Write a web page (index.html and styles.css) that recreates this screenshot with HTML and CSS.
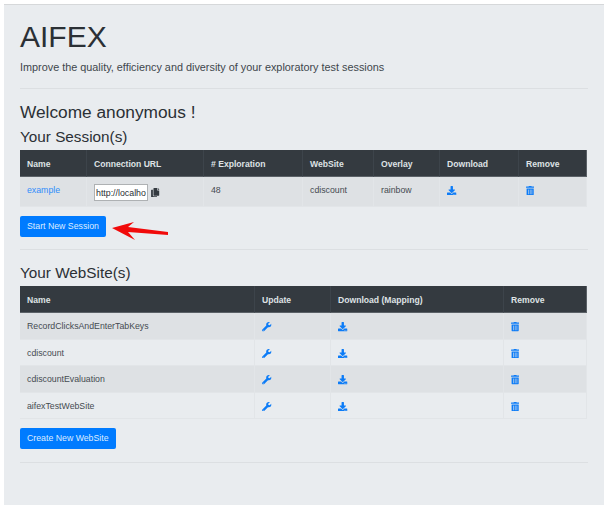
FILE: index.html
```html
<!DOCTYPE html>
<html lang="en">
<head>
<meta charset="utf-8">
<title>AIFEX</title>
<link rel="stylesheet" href="styles.css">
</head>
<body>
<svg class="defs" width="0" height="0" aria-hidden="true">
  <symbol id="i-download" viewBox="0 0 512 512"><path d="M216 0h80c13.3 0 24 10.7 24 24v168h87.7c17.8 0 26.7 21.5 14.1 34.1L269.7 378.3c-7.5 7.5-19.8 7.5-27.3 0L90.1 226.1c-12.6-12.6-3.7-34.1 14.1-34.1H192V24c0-13.3 10.7-24 24-24zm296 376v112c0 13.3-10.7 24-24 24H24c-13.3 0-24-10.7-24-24V376c0-13.3 10.7-24 24-24h146.7l49 49c20.1 20.1 52.5 20.1 72.6 0l49-49H488c13.3 0 24 10.7 24 24zm-124 88c0-11-9-20-20-20s-20 9-20 20 9 20 20 20 20-9 20-20zm64 0c0-11-9-20-20-20s-20 9-20 20 9 20 20 20 20-9 20-20z"/></symbol>
  <symbol id="i-trash" viewBox="0 0 448 512"><path d="M32 464a48 48 0 0 0 48 48h288a48 48 0 0 0 48-48V128H32zm272-256a16 16 0 0 1 32 0v224a16 16 0 0 1-32 0zm-96 0a16 16 0 0 1 32 0v224a16 16 0 0 1-32 0zm-96 0a16 16 0 0 1 32 0v224a16 16 0 0 1-32 0zM432 32H312l-9.4-18.7A24 24 0 0 0 281.1 0H166.8a23.72 23.72 0 0 0-21.4 13.3L136 32H16A16 16 0 0 0 0 48v32a16 16 0 0 0 16 16h416a16 16 0 0 0 16-16V48a16 16 0 0 0-16-16z"/></symbol>
  <symbol id="i-wrench" viewBox="0 0 512 512"><path d="M507.73 109.1c-2.24-9.03-13.54-12.09-20.12-5.51l-74.36 74.36-67.88-11.31-11.31-67.88 74.36-74.36c6.62-6.62 3.43-17.9-5.66-20.16-47.38-11.74-99.55.91-136.58 37.93-39.64 39.64-50.55 97.1-34.05 147.2L18.74 402.76c-24.99 24.99-24.99 65.51 0 90.5 24.99 24.99 65.51 24.99 90.5 0l213.21-213.21c50.12 16.71 107.47 5.68 147.37-34.22 37.07-37.07 49.7-89.32 37.91-136.73zM64 472c-13.25 0-24-10.75-24-24 0-13.26 10.75-24 24-24s24 10.74 24 24c0 13.25-10.75 24-24 24z"/></symbol>
  <symbol id="i-copy" viewBox="0 0 448 512"><path d="M320 448v40c0 13.255-10.745 24-24 24H24c-13.255 0-24-10.745-24-24V120c0-13.255 10.745-24 24-24h72v296c0 30.879 25.121 56 56 56h168zm0-344V0H152c-13.255 0-24 10.745-24 24v368c0 13.255 10.745 24 24 24h272c13.255 0 24-10.745 24-24V128H344c-13.2 0-24-10.8-24-24zm120.971-31.029L375.029 7.029A24 24 0 0 0 358.059 0H352v96h96v-6.059a24 24 0 0 0-7.029-16.97z"/></symbol>
</svg>
<main class="jumbotron">
  <h1 class="title">AIFEX</h1>
  <p class="lead">Improve the quality, efficiency and diversity of your exploratory test sessions</p>
  <hr class="rule rule-top">
  <h2 class="welcome">Welcome anonymous !</h2>
  <h3 class="section-title">Your Session(s)</h3>
  <table class="grid sessions">
    <colgroup><col class="s1"><col class="s2"><col class="s3"><col class="s4"><col class="s5"><col class="s6"><col class="s7"></colgroup>
    <thead>
      <tr><th>Name</th><th>Connection URL</th><th># Exploration</th><th>WebSite</th><th>Overlay</th><th>Download</th><th>Remove</th></tr>
    </thead>
    <tbody>
      <tr class="tall">
        <td><a class="link" href="#">example</a></td>
        <td><span class="url-cell"><input class="url" type="text" value="http://localhost:3000/join"><svg class="icon copy"><use href="#i-copy"/></svg></span></td>
        <td>48</td>
        <td>cdiscount</td>
        <td>rainbow</td>
        <td><svg class="icon"><use href="#i-download"/></svg></td>
        <td><svg class="icon trash"><use href="#i-trash"/></svg></td>
      </tr>
    </tbody>
  </table>
  <div class="actions">
    <a class="btn" href="#">Start New Session</a>
    <svg class="arrow" width="60" height="22" viewBox="0 0 60 22"><polygon points="0,8 22,2 16,7 56,12 56,15 16,12 23,20" fill="#f10a0a"/></svg>
  </div>
  <hr class="rule rule-mid">
  <h3 class="section-title second">Your WebSite(s)</h3>
  <table class="grid sites">
    <colgroup><col class="w1"><col class="w2"><col class="w3"><col class="w4"></colgroup>
    <thead>
      <tr><th>Name</th><th>Update</th><th>Download (Mapping)</th><th>Remove</th></tr>
    </thead>
    <tbody>
      <tr><td>RecordClicksAndEnterTabKeys</td><td><svg class="icon"><use href="#i-wrench"/></svg></td><td><svg class="icon"><use href="#i-download"/></svg></td><td><svg class="icon trash"><use href="#i-trash"/></svg></td></tr>
      <tr><td>cdiscount</td><td><svg class="icon"><use href="#i-wrench"/></svg></td><td><svg class="icon"><use href="#i-download"/></svg></td><td><svg class="icon trash"><use href="#i-trash"/></svg></td></tr>
      <tr><td>cdiscountEvaluation</td><td><svg class="icon"><use href="#i-wrench"/></svg></td><td><svg class="icon"><use href="#i-download"/></svg></td><td><svg class="icon trash"><use href="#i-trash"/></svg></td></tr>
      <tr><td>aifexTestWebSite</td><td><svg class="icon"><use href="#i-wrench"/></svg></td><td><svg class="icon"><use href="#i-download"/></svg></td><td><svg class="icon trash"><use href="#i-trash"/></svg></td></tr>
    </tbody>
  </table>
  <div class="actions">
    <a class="btn" href="#">Create New WebSite</a>
  </div>
  <hr class="rule rule-bottom">
</main>
</body>
</html>
```

FILE: styles.css
```css
html, body {
  margin: 0;
  background: #fff;
}

body {
  height: 505px;
  overflow: hidden;
  padding: 4px 5px 0 4px;
  box-sizing: border-box;
  font-family: "Liberation Sans", Arial, sans-serif;
  color: #2b3035;
}

.defs {
  position: absolute;
}

.jumbotron {
  height: 501px;
  box-sizing: border-box;
  background: #e9ecef;
  border-top: 1px solid #d6d8da;
  padding: 0 16px;
}

.title {
  margin: 0;
  padding-top: 14px;
  font-size: 30px;
  line-height: 36px;
  font-weight: 400;
}

.lead {
  margin: 4px 0 0;
  font-size: 10.85px;
  line-height: 16px;
  color: #40464c;
}

.rule {
  border: 0;
  border-top: 1px solid #dcdfe2;
  margin: 0;
}

.rule-top {
  margin-top: 13px;
}

.welcome {
  margin: 13px 0 0;
  font-size: 17.3px;
  line-height: 20px;
  font-weight: 400;
}

.section-title {
  margin: 5px 0 0;
  font-size: 15.3px;
  line-height: 20px;
  font-weight: 400;
}

.second {
  margin-top: 13px;
}

.grid {
  width: 567px;
  margin-top: 3px;
  border-collapse: separate;
  border-spacing: 0;
  table-layout: fixed;
  font-size: 8.75px;
  line-height: 13px;
}

.grid th {
  height: 27px;
  padding: 2px 7px 0;
  box-sizing: border-box;
  background: #343a40;
  color: #dfe2e5;
  font-size: 8.6px;
  font-weight: 700;
  text-align: left;
  border-right: 1px solid #3d444b;
  border-bottom: 1px solid #5b6167;
}

.grid th:last-child {
  border-right: 1px solid #5b6167;
}

.grid td {
  height: 26.5px;
  padding: 2px 7px 0;
  box-sizing: border-box;
  color: #454b51;
  border-right: 1px solid #e2e5e8;
  border-bottom: 1px solid #e2e5e8;
}

.grid tbody tr:nth-child(odd) td {
  background: #dee1e4;
}

.grid .tall td {
  height: 30px;
  padding-top: 0;
  padding-bottom: 2px;
}

.s1 { width: 67px; }
.s2 { width: 117px; }
.s3 { width: 99px; }
.s4 { width: 71px; }
.s5 { width: 66px; }
.s6 { width: 79px; }
.s7 { width: 68px; }

.w1 { width: 235px; }
.w2 { width: 76px; }
.w3 { width: 173px; }
.w4 { width: 83px; }

.link {
  color: #2f8dfb;
  text-decoration: none;
}

.url-cell {
  display: flex;
  align-items: center;
  gap: 3px;
  margin-top: 4px;
}

.url {
  width: 54px;
  height: 17px;
  box-sizing: border-box;
  padding: 1px;
  border: 1px solid #aeb1b3;
  background: #fff;
  color: #2b3035;
  font: 8.8px "Liberation Sans", Arial, sans-serif;
}

.icon {
  display: block;
  width: 9.5px;
  height: 9.5px;
  fill: #0d7cf7;
}

.trash {
  width: 8.3px;
}

.copy {
  width: 8.5px;
  fill: #343a40;
}

.actions {
  position: relative;
  margin-top: 9px;
  display: flex;
}

.btn {
  display: block;
  padding: 4px 7px;
  font-size: 8.75px;
  line-height: 13px;
  color: #dcebff;
  background: #007bff;
  border-radius: 2px;
  text-decoration: none;
}

.arrow {
  position: absolute;
  left: 92px;
  top: 4px;
}

.rule-mid {
  margin-top: 12px;
}

.rule-bottom {
  margin-top: 13px;
}
```
